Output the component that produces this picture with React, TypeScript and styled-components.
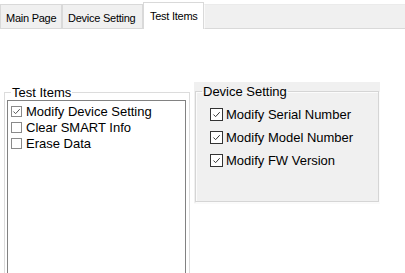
import React from "react"
import styled, { createGlobalStyle } from "styled-components"

const GlobalStyle = createGlobalStyle`
  html, body {
    margin: 0;
    padding: 0;
    background: #ffffff;
    font-family: "Liberation Sans", Arial, sans-serif;
    color: #000000;
  }
  * {
    box-sizing: border-box;
  }
`

const testItems = [
  { label: "Modify Device Setting", checked: true },
  { label: "Clear SMART Info", checked: false },
  { label: "Erase Data", checked: false },
]

const deviceItems = ["Modify Serial Number", "Modify Model Number", "Modify FW Version"]

const tabs = [
  { label: "Main Page", width: 62 },
  { label: "Device Setting", width: 81 },
  { label: "Test Items", width: 61, active: true },
]

const Check = ({ checked, color }: { checked: boolean; color: string }) =>
  checked ? (
    <svg width="100%" height="100%" viewBox="0 0 10 10">
      <polyline points="1.6,5 4,7.4 8.6,2.4" fill="none" stroke={color} strokeWidth="1.1" />
    </svg>
  ) : null

const App = () => {
  return (
    <Page>
      <GlobalStyle />
      <TabStrip>
        {tabs.map(t => (
          <Tab key={t.label} $active={!!t.active} $width={t.width}>
            {t.label}
          </Tab>
        ))}
        <TabFiller />
      </TabStrip>
      <Content>
        <LeftGroup>
          <Legend>Test Items</Legend>
          <ListBox>
            {testItems.map(item => (
              <ListRow key={item.label}>
                <ListCheck>
                  <Check checked={item.checked} color="#555" />
                </ListCheck>
                {item.label}
              </ListRow>
            ))}
          </ListBox>
        </LeftGroup>
        <Panel>
          <RightGroup>
            <Legend $tight>Device Setting</Legend>
            <CheckList>
              {deviceItems.map(label => (
                <CheckRow key={label}>
                  <BoxCheck>
                    <Check checked color="#333" />
                  </BoxCheck>
                  {label}
                </CheckRow>
              ))}
            </CheckList>
          </RightGroup>
        </Panel>
      </Content>
    </Page>
  )
}

export default App

const Page = styled.div`
  width: 405px;
  height: 273px;
  overflow: hidden;
  background: #ffffff;
`

const TabStrip = styled.div`
  display: flex;
  align-items: flex-end;
  height: 29px;
`

const Tab = styled.div<{ $active: boolean; $width: number }>`
  width: ${p => p.$width}px;
  height: ${p => (p.$active ? 27 : 25)}px;
  padding: 7px 0 0 ${p => (p.$active ? 6 : 5)}px;
  font-size: 11px;
  letter-spacing: -0.25px;
  line-height: 13px;
  white-space: nowrap;
  background: ${p => (p.$active ? "#ffffff" : "#f0f0f0")};
  border: 1px solid #d9d9d9;
  border-bottom: ${p => (p.$active ? "none" : "1px solid #d9d9d9")};
  & + & {
    border-left: ${p => (p.$active ? "1px solid #d9d9d9" : "none")};
  }
`

const TabFiller = styled.div`
  flex: 1;
  height: 25px;
  background: #f0f0f0;
  border-top: 1px solid #ebebeb;
  border-left: 1px solid #fafafa;
  border-bottom: 1px solid #d9d9d9;
`

const Content = styled.div`
  display: flex;
  align-items: flex-start;
  gap: 4px;
  padding: 53px 0 0 4px;
`

const LeftGroup = styled.fieldset`
  margin: 3px 0 0;
  padding: 0 3px 0 2px;
  width: 186px;
  height: 200px;
  border: 1px solid #dcdcdc;
  min-width: 0;
`

const Legend = styled.legend<{ $tight?: boolean }>`
  margin-left: ${p => (p.$tight ? 0 : 4)}px;
  padding: 0 1px;
  font-size: 13px;
  line-height: 15px;
`

const ListBox = styled.div`
  height: 190px;
  padding: 2px 3px;
  background: #ffffff;
  border: 1px solid #828282;
`

const ListRow = styled.div`
  display: flex;
  align-items: center;
  gap: 4px;
  height: 16px;
  font-size: 13px;
  white-space: nowrap;
`

const ListCheck = styled.span`
  display: inline-flex;
  flex: none;
  width: 11px;
  height: 11px;
  border: 1px solid #8a8a8a;
  background: #ffffff;
`

const Panel = styled.div`
  width: 186px;
  height: 122px;
  padding: 2px 1px 1px 1px;
  background: #f0f0f0;
  border-bottom: 1px solid #fafafa;
`

const RightGroup = styled.fieldset`
  margin: 0;
  padding: 0 0 0 6px;
  height: 118px;
  min-width: 0;
  border: 1px solid #d5d5d5;
  box-shadow: inset 1px 1px 0 #fbfbfb, 1px 1px 0 #fbfbfb;
`

const CheckList = styled.div`
  display: flex;
  flex-direction: column;
  padding: 4px 0 0 8px;
`

const CheckRow = styled.div`
  display: flex;
  align-items: center;
  gap: 3px;
  height: 23px;
  font-size: 13px;
  white-space: nowrap;
`

const BoxCheck = styled.span`
  display: inline-flex;
  flex: none;
  width: 13px;
  height: 13px;
  padding: 1px;
  border: 1px solid #333333;
  background: #ffffff;
`
